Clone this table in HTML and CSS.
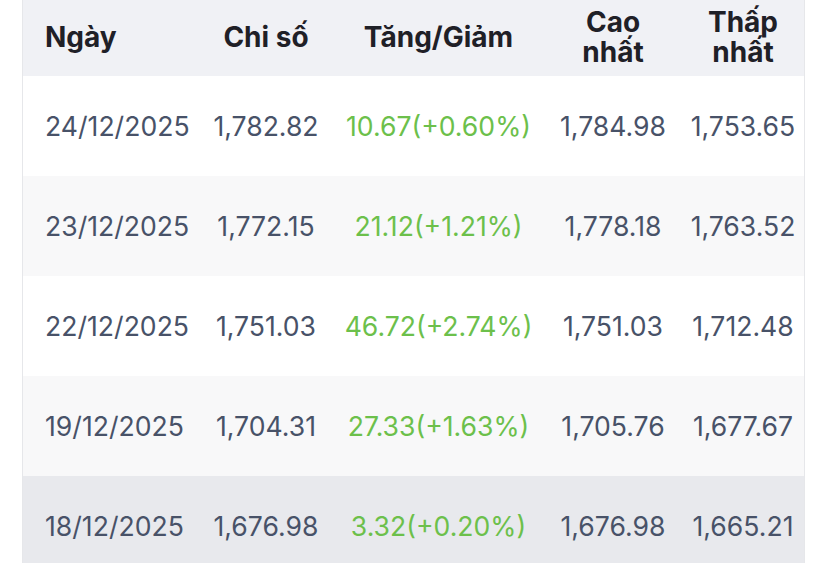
FILE: index.html
```html
<!DOCTYPE html>
<html lang="vi">
<head>
<meta charset="utf-8">
<link rel="stylesheet" href="styles.css">
</head>
<body>
<div class="table">
  <div class="row head">
    <div class="cell first">Ngày</div>
    <div class="cell">Chi số</div>
    <div class="cell">Tăng/Giảm</div>
    <div class="cell">Cao<br>nhất</div>
    <div class="cell c5">Thấp<br>nhất</div>
  </div>
  <div class="row">
    <div class="cell first">24/12/2025</div>
    <div class="cell">1,782.82</div>
    <div class="cell up">10.67(+0.60%)</div>
    <div class="cell">1,784.98</div>
    <div class="cell c5">1,753.65</div>
  </div>
  <div class="row alt">
    <div class="cell first">23/12/2025</div>
    <div class="cell">1,772.15</div>
    <div class="cell up">21.12(+1.21%)</div>
    <div class="cell">1,778.18</div>
    <div class="cell c5">1,763.52</div>
  </div>
  <div class="row">
    <div class="cell first">22/12/2025</div>
    <div class="cell">1,751.03</div>
    <div class="cell up">46.72(+2.74%)</div>
    <div class="cell">1,751.03</div>
    <div class="cell c5">1,712.48</div>
  </div>
  <div class="row alt">
    <div class="cell first">19/12/2025</div>
    <div class="cell">1,704.31</div>
    <div class="cell up">27.33(+1.63%)</div>
    <div class="cell">1,705.76</div>
    <div class="cell c5">1,677.67</div>
  </div>
  <div class="row hover">
    <div class="cell first">18/12/2025</div>
    <div class="cell">1,676.98</div>
    <div class="cell up">3.32(+0.20%)</div>
    <div class="cell">1,676.98</div>
    <div class="cell c5">1,665.21</div>
  </div>
</div>
</body>
</html>
```

FILE: styles.css
```css
html, body {
  margin: 0;
  padding: 0;
  background: #ffffff;
  overflow: hidden;
}
body {
  font-family: Inter, "Noto Sans", sans-serif;
  width: 828px;
  height: 563px;
}
.table {
  margin-left: 22px;
  width: 781px;
  border-left: 1px solid #e6e7ea;
  border-right: 1px solid #e6e7ea;
}
.row {
  display: grid;
  grid-template-columns: 187px 112px 233px 116px 133px;
  height: 100px;
  align-items: center;
  background: #ffffff;
  color: #485268;
  font-size: 26.6px;
  line-height: 1;
}
.row.alt {
  background: #f8f8f9;
}
.row.hover {
  background: #e8e9ed;
}
.row.head {
  height: 76px;
  background: #f0f1f5;
  color: #1f2027;
  font-weight: 700;
  font-size: 28px;
  line-height: 30px;
  padding-bottom: 3px;
  box-sizing: border-box;
}
.cell {
  text-align: center;
  white-space: nowrap;
}
.cell.first {
  text-align: left;
  padding-left: 22px;
}
.cell.c5 {
  padding-left: 11px;
}
.cell.up {
  color: #6cc04b;
}
```
